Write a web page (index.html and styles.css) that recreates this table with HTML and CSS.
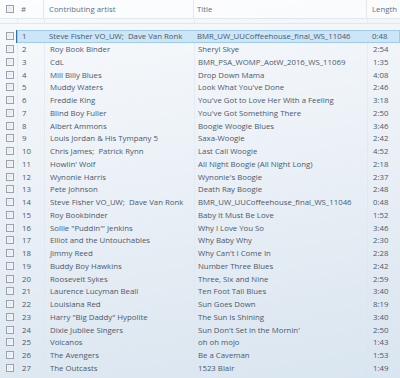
FILE: index.html
```html
<!DOCTYPE html>
<html>
<head>
<meta charset="utf-8">
<link rel="stylesheet" href="styles.css">
</head>
<body>
<div class="list">
  <div class="row head">
    <div class="c cb"><span class="box"></span></div>
    <div class="c num">#</div>
    <div class="c">Contributing artist</div>
    <div class="c ttl">Title</div>
    <div class="c">Length</div>
  </div>
  <div class="spacer"><div></div><div></div><div></div><div></div><div></div></div>
  <div class="rows">
    <div class="row sel"><div class="c cb"><span class="box"></span></div><div class="c num">1</div><div class="c">Steve Fisher VO_UW;&nbsp; Dave Van Ronk</div><div class="c ttl">BMR_UW_UUCoffeehouse_final_WS_11046</div><div class="c">0:48</div></div>
    <div class="row"><div class="c cb"><span class="box"></span></div><div class="c num">2</div><div class="c">Roy Book Binder</div><div class="c ttl">Sheryl Skye</div><div class="c">2:54</div></div>
    <div class="row"><div class="c cb"><span class="box"></span></div><div class="c num">3</div><div class="c">CdL</div><div class="c ttl">BMR_PSA_WOMP_AotW_2016_WS_11069</div><div class="c">1:35</div></div>
    <div class="row"><div class="c cb"><span class="box"></span></div><div class="c num">4</div><div class="c">Mill Billy Blues</div><div class="c ttl">Drop Down Mama</div><div class="c">4:08</div></div>
    <div class="row"><div class="c cb"><span class="box"></span></div><div class="c num">5</div><div class="c">Muddy Waters</div><div class="c ttl">Look What You've Done</div><div class="c">2:46</div></div>
    <div class="row"><div class="c cb"><span class="box"></span></div><div class="c num">6</div><div class="c">Freddie King</div><div class="c ttl">You've Got to Love Her With a Feeling</div><div class="c">3:18</div></div>
    <div class="row"><div class="c cb"><span class="box"></span></div><div class="c num">7</div><div class="c">Blind Boy Fuller</div><div class="c ttl">You've Got Something There</div><div class="c">2:50</div></div>
    <div class="row"><div class="c cb"><span class="box"></span></div><div class="c num">8</div><div class="c">Albert Ammons</div><div class="c ttl">Boogie Woogie Blues</div><div class="c">3:46</div></div>
    <div class="row"><div class="c cb"><span class="box"></span></div><div class="c num">9</div><div class="c">Louis Jordan &amp; His Tympany 5</div><div class="c ttl">Saxa-Woogie</div><div class="c">2:42</div></div>
    <div class="row"><div class="c cb"><span class="box"></span></div><div class="c num">10</div><div class="c">Chris James;&nbsp; Patrick Rynn</div><div class="c ttl">Last Call Woogie</div><div class="c">4:52</div></div>
    <div class="row"><div class="c cb"><span class="box"></span></div><div class="c num">11</div><div class="c">Howlin' Wolf</div><div class="c ttl">All Night Boogie (All Night Long)</div><div class="c">2:18</div></div>
    <div class="row"><div class="c cb"><span class="box"></span></div><div class="c num">12</div><div class="c">Wynonie Harris</div><div class="c ttl">Wynonie's Boogie</div><div class="c">2:37</div></div>
    <div class="row"><div class="c cb"><span class="box"></span></div><div class="c num">13</div><div class="c">Pete Johnson</div><div class="c ttl">Death Ray Boogie</div><div class="c">2:48</div></div>
    <div class="row"><div class="c cb"><span class="box"></span></div><div class="c num">14</div><div class="c">Steve Fisher VO_UW;&nbsp; Dave Van Ronk</div><div class="c ttl">BMR_UW_UUCoffeehouse_final_WS_11046</div><div class="c">0:48</div></div>
    <div class="row"><div class="c cb"><span class="box"></span></div><div class="c num">15</div><div class="c">Roy Bookbinder</div><div class="c ttl">Baby It Must Be Love</div><div class="c">1:52</div></div>
    <div class="row"><div class="c cb"><span class="box"></span></div><div class="c num">16</div><div class="c">Sollie "Puddin'" Jenkins</div><div class="c ttl">Why I Love You So</div><div class="c">3:46</div></div>
    <div class="row"><div class="c cb"><span class="box"></span></div><div class="c num">17</div><div class="c">Elliot and the Untouchables</div><div class="c ttl">Why Baby Why</div><div class="c">2:30</div></div>
    <div class="row"><div class="c cb"><span class="box"></span></div><div class="c num">18</div><div class="c">Jimmy Reed</div><div class="c ttl">Why Can't I Come In</div><div class="c">2:28</div></div>
    <div class="row"><div class="c cb"><span class="box"></span></div><div class="c num">19</div><div class="c">Buddy Boy Hawkins</div><div class="c ttl">Number Three Blues</div><div class="c">2:42</div></div>
    <div class="row"><div class="c cb"><span class="box"></span></div><div class="c num">20</div><div class="c">Roosevelt Sykes</div><div class="c ttl">Three, Six and Nine</div><div class="c">2:59</div></div>
    <div class="row"><div class="c cb"><span class="box"></span></div><div class="c num">21</div><div class="c">Laurence Lucyman Beall</div><div class="c ttl">Ten Foot Tall Blues</div><div class="c">3:40</div></div>
    <div class="row"><div class="c cb"><span class="box"></span></div><div class="c num">22</div><div class="c">Louisiana Red</div><div class="c ttl">Sun Goes Down</div><div class="c">8:19</div></div>
    <div class="row"><div class="c cb"><span class="box"></span></div><div class="c num">23</div><div class="c">Harry "Big Daddy" Hypolite</div><div class="c ttl">The Sun Is Shining</div><div class="c">3:40</div></div>
    <div class="row"><div class="c cb"><span class="box"></span></div><div class="c num">24</div><div class="c">Dixie Jubilee Singers</div><div class="c ttl">Sun Don't Set in the Mornin'</div><div class="c">2:50</div></div>
    <div class="row"><div class="c cb"><span class="box"></span></div><div class="c num">25</div><div class="c">Volcanos</div><div class="c ttl">oh oh mojo</div><div class="c">1:43</div></div>
    <div class="row"><div class="c cb"><span class="box"></span></div><div class="c num">26</div><div class="c">The Avengers</div><div class="c ttl">Be a Caveman</div><div class="c">1:53</div></div>
    <div class="row"><div class="c cb"><span class="box"></span></div><div class="c num">27</div><div class="c">The Outcasts</div><div class="c ttl">1523 Blair</div><div class="c">1:49</div></div>
  </div>
</div>
</body>
</html>
```
FILE: styles.css
```css
html, body {
  margin: 0;
  padding: 0;
}
body {
  width: 400px;
  height: 378px;
  overflow: hidden;
}
.list {
  width: 400px;
  height: 378px;
  background: linear-gradient(170deg, #f8fafc 0%, #eef3f8 35%, #e3ebf3 70%, #d9e5f0 100%);
  font-family: "Open Sans", "Noto Sans", sans-serif;
  font-size: 7.8px;
  color: #4b596c;
}
.row {
  display: grid;
  grid-template-columns: 17px 27px 150px 173px 33px;
  height: 12.75px;
  align-items: center;
}
.c {
  white-space: nowrap;
  overflow: hidden;
  padding-left: 5px;
  line-height: 12px;
}
.num { padding-left: 4px; }
.ttl { padding-left: 3px; }
.cb { padding-left: 6px; display: flex; align-items: center; }
.box {
  width: 6px;
  height: 6px;
  border: 1px solid #9aa3ad;
  background: linear-gradient(135deg, #dfe3e8, #f7f8fa);
  box-shadow: inset 0 0 0 1px #f2f4f6;
}
.head {
  height: 18px;
  border-bottom: 1px solid #e1e7ee;
  background: rgba(255,255,255,0.55);
  color: #5f6e82;
}
.head .c {
  height: 18px;
  line-height: 18px;
  border-right: 1px solid #e3e8ef;
}
.head .c:last-child { border-right: none; }
.head .cb { border-right: none; }
.spacer {
  display: grid;
  grid-template-columns: 17px 27px 150px 173px 33px;
  height: 4px;
  border-bottom: 1px solid #e1e7ee;
}
.spacer div + div { border-left: 1px solid #e6ebf1; }
.rows {
  padding-top: 6px;
}
.rows .row .c:nth-child(n+2) {
  border-left: 1px solid rgba(220, 228, 238, 0.6);
}
.sel .c:nth-child(n+2) {
  background: #cce5f7;
  border-top: 1px solid #9ccbee;
  border-bottom: 1px solid #9ccbee;
  border-left: none !important;
  height: 10.75px;
  line-height: 10.75px;
}
.sel .c:nth-child(2) {
  border-left: 1px solid #9ccbee !important;
  box-shadow: -1px 0 0 #2b6fb5;
}
.sel .c:last-child { border-right: 1px solid #9ccbee; }
```
